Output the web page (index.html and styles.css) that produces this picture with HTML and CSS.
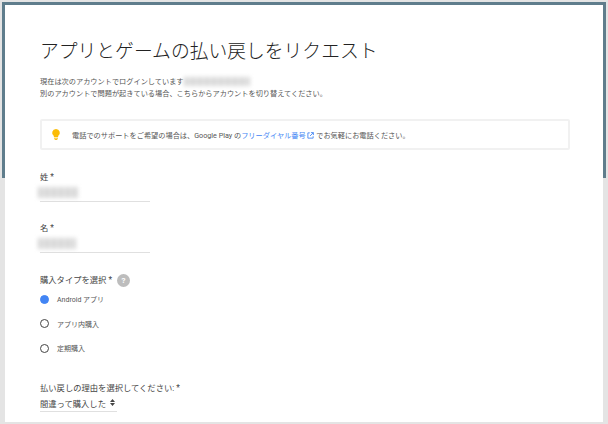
FILE: index.html
```html
<!DOCTYPE html>
<html lang="ja">
<head>
  <meta charset="UTF-8">
  <meta name="viewport" content="width=device-width, initial-scale=1.0">
  <title>アプリとゲームの払い戻しをリクエスト</title>
  <link rel="stylesheet" href="styles.css">
</head>
<body>
  <div class="frame">
    <div class="page">
      <h1>アプリとゲームの払い戻しをリクエスト</h1>

      <p class="account">
        現在は次のアカウントでログインしています<span class="blur blur-email"></span><br>
        別のアカウントで問題が起きている場合、こちらからアカウントを切り替えてください。
      </p>

      <div class="notice">
        <svg class="bulb" width="10" height="13" viewBox="0 0 12 14">
          <path d="M6 .5a4.600 4.600 0 0 0-2.600 8.400V10h5.200V8.900A4.600 4.600 0 0 0 6 .5z" fill="#fbbc05"/>
          <rect x="3.600" y="10.800" width="4.800" height="1.200" fill="#fbbc05"/>
          <rect x="4.400" y="12.500" width="3.200" height="1.100" fill="#fbbc05"/>
        </svg>
        <p>電話でのサポートをご希望の場合は、Google Play の<a href="#">フリーダイヤル番号
          <svg class="ext" width="7" height="7" viewBox="0 0 8 8"><path d="M3.200 1H1v6h6V4.800M4.500 .7h2.800v2.800M7.200 .8 3.500 4.500" fill="none" stroke="#4285f4"/></svg></a> でお気軽にお電話ください。</p>
      </div>

      <div class="field">
        <label>姓 *</label>
        <div class="input"><span class="blur blur-last"></span></div>
      </div>

      <div class="field">
        <label>名 *</label>
        <div class="input"><span class="blur blur-first"></span></div>
      </div>

      <div class="type-head">
        <label>購入タイプを選択 *</label>
        <span class="help">?</span>
      </div>
      <div class="radio-row"><span class="radio on"></span>Android アプリ</div>
      <div class="radio-row"><span class="radio"></span>アプリ内購入</div>
      <div class="radio-row"><span class="radio"></span>定期購入</div>

      <div class="reason">
        <label>払い戻しの理由を選択してください: *</label>
        <div class="select">間違って購入した
          <svg width="5" height="7" viewBox="0 0 5 7"><path d="M2.500 0 5 3H0zM2.500 7 0 4h5z" fill="#444"/></svg>
        </div>
      </div>
    </div>
  </div>
</body>
</html>
```

FILE: styles.css
```css
* {
  box-sizing: border-box;
}

html, body {
  margin: 0;
  height: 100%;
  overflow: hidden;
}

body {
  font-family: Roboto, "Noto Sans CJK JP", sans-serif;
  color: #444;
  background-color: #e4e4e4;
}

.frame {
  height: 420px;
  margin: 2px 2px 0 2px;
  padding: 3px 3px 0 3px;
  background: linear-gradient(#5f7d8c 176px, #e4e4e4 176px);
}

.page {
  height: 100%;
  padding: 32px 33px 0 35px;
  background-color: #fff;
  overflow: hidden;
}

h1 {
  margin: 0;
  font-size: 18.800px;
  line-height: 30px;
  font-weight: 300;
  color: #222;
}

.account {
  margin: 9px 0 0 0;
  font-size: 7.200px;
  line-height: 11.500px;
  color: #555;
}

.blur {
  display: inline-block;
  background: repeating-linear-gradient(90deg, #d6d6d6 0 4px, #e4e4e4 4px 7px);
  filter: blur(2px);
}

.blur-email {
  width: 66px;
  height: 9px;
  vertical-align: top;
  margin-top: 1px;
}

.notice {
  display: flex;
  align-items: center;
  height: 31px;
  margin: 20px 0 0 0;
  padding: 0 0 0 9px;
  border: 2px solid #f1f1f1;
  border-radius: 2px;
}

.notice p {
  margin: 0 0 0 11px;
  font-size: 7.200px;
  color: #555;
}

.notice a {
  color: #4285f4;
  text-decoration: none;
}

.ext {
  vertical-align: -1px;
}

.field {
  width: 110px;
  margin-top: 21px;
}

.field + .field {
  margin-top: 20px;
}

label {
  font-size: 8.300px;
  line-height: 13px;
  display: block;
}

.input {
  height: 18px;
  padding-top: 3px;
  border-bottom: 1px solid #e0e0e0;
}

.input .blur {
  height: 11px;
  vertical-align: top;
  margin-left: -2px;
}

.blur-last {
  width: 40px;
}

.blur-first {
  width: 38px;
}

.type-head {
  display: flex;
  align-items: center;
  gap: 5px;
  margin-top: 21px;
}

.help {
  width: 13px;
  height: 13px;
  border-radius: 50%;
  background-color: #bdbdbd;
  color: #fff;
  font-size: 8px;
  font-weight: 700;
  line-height: 13px;
  text-align: center;
}

.radio-row {
  display: flex;
  align-items: center;
  height: 24.500px;
  font-size: 7px;
  color: #555;
}

.radio {
  width: 9px;
  height: 9px;
  margin-right: 8px;
  border: 1.500px solid #444;
  border-radius: 50%;
}

.radio.on {
  background-color: #4285f4;
  border-color: #4285f4;
}

.reason {
  margin-top: 21px;
}

.select {
  display: flex;
  align-items: center;
  gap: 4px;
  width: 77px;
  height: 17px;
  font-size: 8.300px;
  white-space: nowrap;
  border-bottom: 1px solid #e0e0e0;
}

.select svg {
  flex-shrink: 0;
}
```
